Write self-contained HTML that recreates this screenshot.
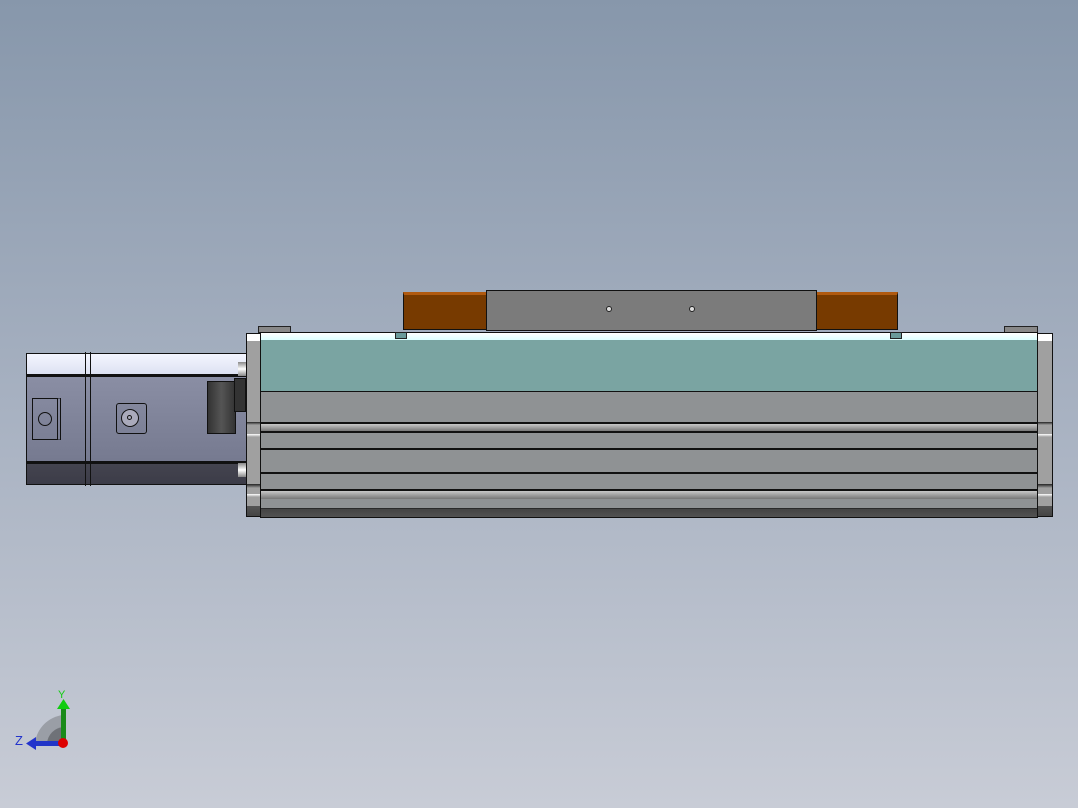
<html><body style="margin:0;width:1078px;height:808px;position:relative;overflow:hidden;background:linear-gradient(#8797ab,#a7b1c1 50%,#c8ccd6);font-family:'Liberation Sans',sans-serif">
<style>div{position:absolute;box-sizing:border-box}</style>
<!-- carriage -->
<div style="left:403px;top:292px;width:84px;height:38px;background:#773a00;border:1px solid #111;border-top:3px solid #b05a10"></div>
<div style="left:816px;top:292px;width:82px;height:38px;background:#773a00;border:1px solid #111;border-top:3px solid #b05a10"></div>
<div style="left:486px;top:290px;width:331px;height:41px;background:#7b7b7b;border:1px solid #111"></div>
<div style="left:606px;top:306px;width:6px;height:6px;border-radius:50%;background:#ddd;border:1px solid #222"></div>
<div style="left:689px;top:306px;width:6px;height:6px;border-radius:50%;background:#ddd;border:1px solid #222"></div>
<!-- small tabs -->
<div style="left:258px;top:326px;width:33px;height:7px;background:#888;border:1px solid #222"></div>
<div style="left:1004px;top:326px;width:34px;height:7px;background:#888;border:1px solid #222"></div>
<!-- main body -->
<div style="left:260px;top:332px;width:778px;height:186px;border:1px solid #111;background:linear-gradient(#fff 0,#dff 7px,#7aa4a2 7px,#7aa4a2 58px,#111 58px,#111 59px,#8f9294 59px,#8f9294 89px,#111 89px,#111 91px,#c8c8c8 91px,#777 98px,#111 98px,#111 100px,#8f9294 100px,#8f9294 115px,#111 115px,#111 117px,#8f9294 117px,#8f9294 139px,#111 139px,#111 141px,#8f9294 141px,#8f9294 156px,#111 156px,#111 158px,#c8c8c8 158px,#777 166px,#8f9294 166px,#8f9294 175px,#111 175px,#444 176px,#555 186px)"></div>
<div style="left:395px;top:332px;width:12px;height:7px;background:#6a9a9a;border:1px solid #222"></div>
<div style="left:890px;top:332px;width:12px;height:7px;background:#6a9a9a;border:1px solid #222"></div>
<!-- end caps -->
<div style="left:246px;top:333px;width:15px;height:184px;border:1px solid #111;background:linear-gradient(#fff 0,#fff 7px,#a0a0a0 7px,#a0a0a0 88px,#222 88px,#a0a0a0 91px,#a0a0a0 100px,#fff 100px,#a0a0a0 103px,#a0a0a0 150px,#222 150px,#a0a0a0 154px,#a0a0a0 160px,#fff 160px,#a0a0a0 163px,#a0a0a0 172px,#555 172px,#444)"></div>
<div style="left:1037px;top:333px;width:16px;height:184px;border:1px solid #111;background:linear-gradient(#fff 0,#fff 7px,#a0a0a0 7px,#a0a0a0 88px,#222 88px,#a0a0a0 91px,#a0a0a0 100px,#fff 100px,#a0a0a0 103px,#a0a0a0 150px,#222 150px,#a0a0a0 154px,#a0a0a0 160px,#fff 160px,#a0a0a0 163px,#a0a0a0 172px,#555 172px,#444)"></div>
<!-- motor -->
<div style="left:26px;top:353px;width:221px;height:132px;border:1px solid #111;background:linear-gradient(#f4f6ff 0,#dde2f2 20px,#111 20px,#111 23px,#8a8ea4 23px,#767a90 107px,#111 107px,#111 110px,#44444f 110px,#3c3c48)"></div>
<div style="left:85px;top:352px;width:6px;height:134px;border-left:1px solid #111;border-right:1px solid #111"></div>
<div style="left:32px;top:398px;width:29px;height:42px;border:1px solid #111;border-right:4px double #111"></div>
<div style="left:38px;top:412px;width:14px;height:14px;border-radius:50%;border:1px solid #111"></div>
<div style="left:116px;top:403px;width:31px;height:31px;border:1px solid #111;border-radius:3px"></div>
<div style="left:121px;top:409px;width:18px;height:18px;border-radius:50%;border:1px solid #111;background:#aab"></div>
<div style="left:127px;top:415px;width:5px;height:5px;border-radius:50%;border:1px solid #111"></div>
<div style="left:207px;top:381px;width:29px;height:53px;background:linear-gradient(90deg,#333,#555 50%,#333);border:1px solid #111"></div>
<div style="left:234px;top:378px;width:12px;height:34px;background:#333;border:1px solid #111"></div>
<div style="left:238px;top:362px;width:8px;height:14px;background:linear-gradient(#888,#fff,#888)"></div>
<div style="left:238px;top:463px;width:8px;height:14px;background:linear-gradient(#888,#fff,#888)"></div>
<!-- axis -->
<svg style="position:absolute;left:10px;top:685px" width="70" height="70">
<path d="M25 58 A32 32 0 0 1 53 30 L53 58Z" fill="#9a9ea6"/>
<path d="M37 58 A18 18 0 0 1 53 42 L53 58Z" fill="#6f7278"/>
<rect x="51" y="22" width="5" height="34" fill="#1a8a1a"/><path d="M47 24 L53.5 14 L60 24Z" fill="#1c1"/>
<rect x="24" y="56" width="30" height="5" fill="#2236c8"/><path d="M26 52 L16 58.5 L26 65Z" fill="#23c"/>
<circle cx="53" cy="58" r="5" fill="#d00"/>
<text x="48" y="13" font-size="11" fill="#1c1">Y</text>
<text x="5" y="60" font-size="13" fill="#23c">Z</text>
</svg>
</body></html>
